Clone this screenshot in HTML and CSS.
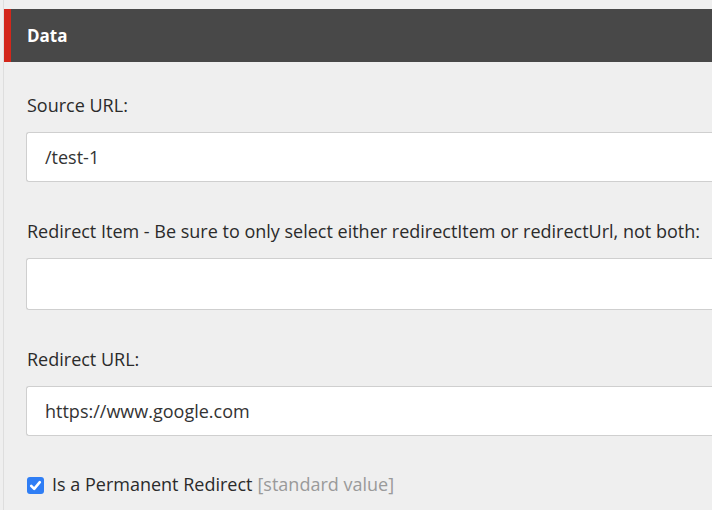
FILE: index.html
```html
<!DOCTYPE html>
<html>
<head>
<meta charset="utf-8">
<link rel="stylesheet" href="styles.css">
</head>
<body>
<div class="page">
  <div class="section-header">Data</div>
  <div class="section-body">
    <div class="field">
      <div class="field-label">Source URL:</div>
      <div class="field-input">/test-1</div>
    </div>
    <div class="field">
      <div class="field-label">Redirect Item - Be sure to only select either redirectItem or redirectUrl, not both:</div>
      <div class="field-input field-input-tall"></div>
    </div>
    <div class="field">
      <div class="field-label">Redirect URL:</div>
      <div class="field-input">https://www.google.com</div>
    </div>
    <div class="check-row">
      <span class="check-box">
        <svg width="17" height="17" viewBox="0 0 17 17"><path d="M4.2 8.8 L7.2 11.8 L12.8 5.2" fill="none" stroke="#fff" stroke-width="2.6" stroke-linecap="round" stroke-linejoin="round"/></svg>
      </span>
      <span class="check-label">Is a Permanent Redirect</span>
      <span class="check-note">[standard value]</span>
    </div>
  </div>
</div>
</body>
</html>
```
FILE: styles.css
```css
html, body {
  margin: 0;
  padding: 0;
  background: #efefef;
  font-family: "Open Sans", "Liberation Sans", sans-serif;
  color: #2b2b2b;
  overflow: hidden;
}
.page {
  margin-left: 3px;
  border-left: 1px solid #dedede;
  height: 510px;
  box-sizing: border-box;
  padding-top: 9px;
}
.section-header {
  height: 53px;
  box-sizing: border-box;
  background: #484848;
  border-left: 7px solid #d3271b;
  color: #fff;
  font-weight: 700;
  font-size: 17px;
  display: flex;
  align-items: center;
  padding-left: 16px;
}
.section-body {
  padding: 31px 0 0 22px;
}
.field {
  margin-bottom: 37px;
}
.field-label {
  font-size: 18px;
  line-height: 24px;
  margin-left: 1px;
  margin-bottom: 15px;
  white-space: nowrap;
}
.field-input {
  height: 50px;
  box-sizing: border-box;
  background: #fff;
  border: 1px solid #cfcfcf;
  border-right: none;
  border-radius: 3px 0 0 3px;
  display: flex;
  align-items: center;
  padding-left: 18px;
  font-size: 18px;
  color: #333;
}
.field-input-tall {
  height: 52px;
}
.check-row {
  display: flex;
  align-items: center;
  font-size: 18px;
  line-height: 24px;
  height: 24px;
  margin-top: -1px;
}
.check-box {
  width: 17px;
  height: 17px;
  border-radius: 3px;
  background: #2f7ef5;
  display: flex;
  margin: 3px 8px 0 1px;
}
.check-label {
  margin-right: 5px;
}
.check-note {
  color: #9a9a9a;
}
```
